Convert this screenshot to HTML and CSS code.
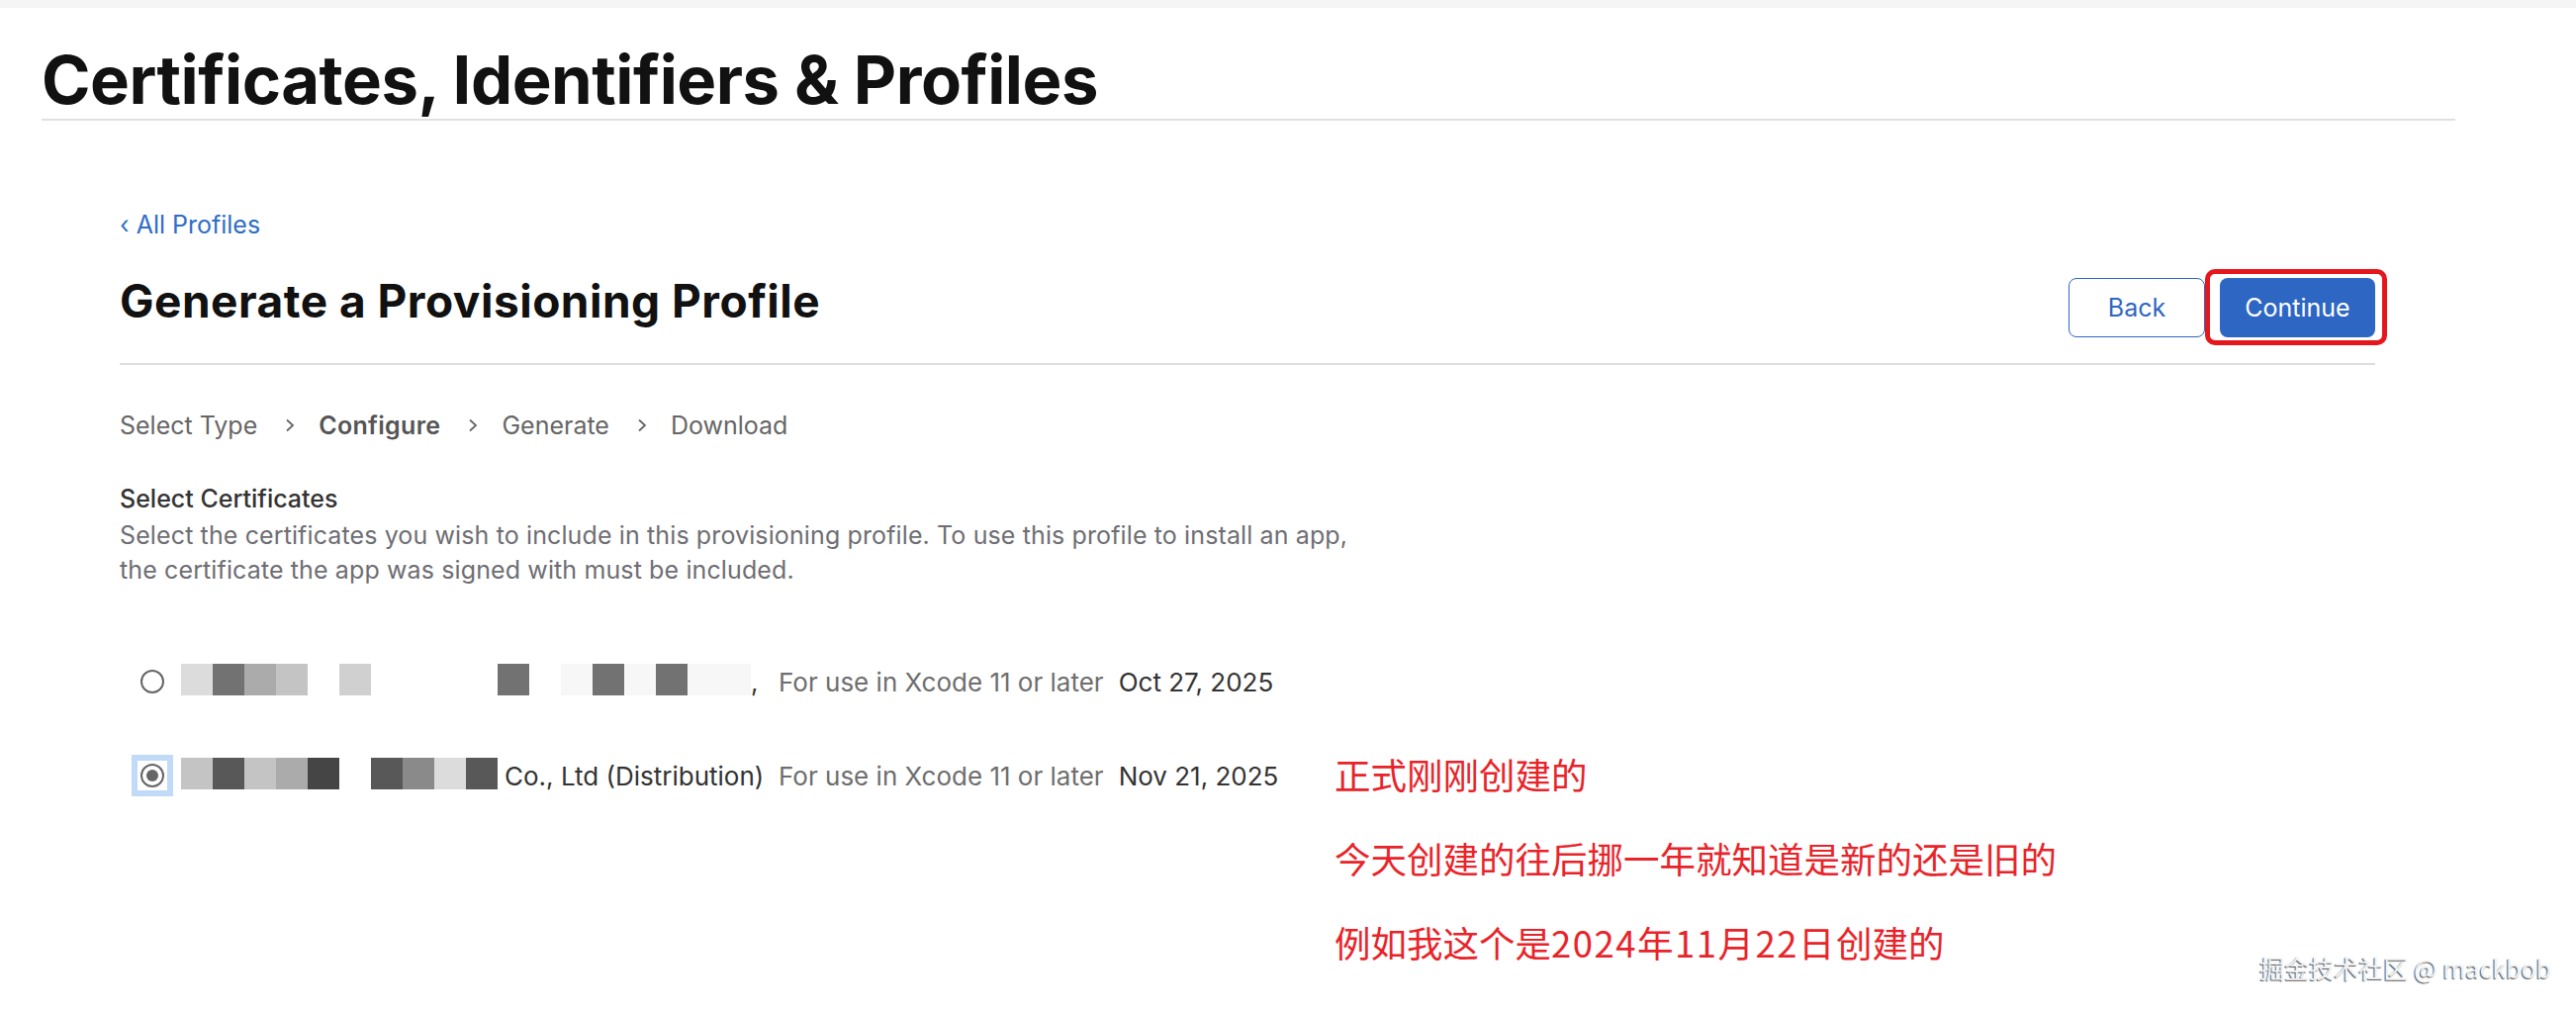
FILE: index.html
```html
<!DOCTYPE html>
<html lang="en">
<head>
  <meta charset="UTF-8" />
  <meta name="viewport" content="width=device-width, initial-scale=1.0" />
  <title>Certificates, Identifiers &amp; Profiles</title>
  <link rel="stylesheet" href="styles.css">
</head>
<body>
  <div class="topbar"></div>
  <header class="page-header">
    <h1>Certificates, Identifiers &amp; Profiles</h1>
  </header>
  <main class="content">
    <a class="back-link" href="#">&lsaquo; All Profiles</a>
    <div class="title-row">
      <h2>Generate a Provisioning Profile</h2>
      <div class="actions">
        <button class="btn btn-secondary">Back</button>
        <span class="highlight"><button class="btn btn-primary">Continue</button></span>
      </div>
    </div>

    <!-- wizard steps -->
    <nav class="steps">
      <span>Select Type</span>
      <svg class="chev" viewBox="0 0 10 14"><path d="M2 1.5 L8 7 L2 12.5" /></svg>
      <span class="current">Configure</span>
      <svg class="chev" viewBox="0 0 10 14"><path d="M2 1.5 L8 7 L2 12.5" /></svg>
      <span>Generate</span>
      <svg class="chev" viewBox="0 0 10 14"><path d="M2 1.5 L8 7 L2 12.5" /></svg>
      <span>Download</span>
    </nav>

    <section class="certs">
      <h3>Select Certificates</h3>
      <p>Select the certificates you wish to include in this provisioning profile. To use this profile to install an app,<br>the certificate the app was signed with must be included.</p>

      <ul class="cert-list">
        <li class="cert">
          <span class="radio-wrap"><span class="radio"></span></span>
          <span class="cert-name">
            <i class="blk s1"></i><i class="blk s2"></i><i class="blk s3"></i><i class="blk s4"></i><i class="blk"></i><i class="blk s5"></i><i class="blk"></i><i class="blk"></i><i class="blk"></i><i class="blk"></i><i class="blk s2"></i><i class="blk"></i><i class="blk s0"></i><i class="blk s2"></i><i class="blk s0"></i><i class="blk s2"></i><i class="blk s0"></i><i class="blk s0"></i>,
          </span>
          <span class="cert-use">For use in Xcode 11 or later</span>
          <span class="cert-date">Oct 27, 2025</span>
        </li>
        <li class="cert">
          <span class="radio-wrap focused"><span class="radio checked"></span></span>
          <span class="cert-name">
            <i class="blk s4"></i><i class="blk s6"></i><i class="blk s4"></i><i class="blk s3"></i><i class="blk s7"></i><i class="blk"></i><i class="blk s6"></i><i class="blk s8"></i><i class="blk s1"></i><i class="blk s6"></i><span class="org">Co., Ltd (Distribution)</span>
          </span>
          <span class="cert-use">For use in Xcode 11 or later</span>
          <span class="cert-date">Nov 21, 2025</span>
        </li>
      </ul>
    </section>
  </main>

  <div class="notes">
    <p>正式刚刚创建的</p>
    <p>今天创建的往后挪一年就知道是新的还是旧的</p>
    <p>例如我这个是<span class="date">2024年11月22日</span>创建的</p>
  </div>
  <div class="watermark">掘金技术社区 @ mackbob</div>
</body>
</html>
```

FILE: styles.css
```css
body {
  margin: 0;
  font-family: Inter, "Noto Sans", sans-serif;
  color: #1d1d1f;
  background: #fff;
}

.topbar {
  height: 8px;
  background-color: #f5f5f5;
}

.page-header {
  margin: 0 122px 0 42px;
}
.page-header h1 {
  margin: 34px 0 0;
  font-size: 67px;
  line-height: 78px;
  font-weight: 700;
  letter-spacing: -0.5px;
  color: #111;
  border-bottom: 2px solid #e0e0e0;
}

.content {
  padding: 0 203px 0 121px;
}

.back-link {
  display: block;
  margin-top: 87px;
  font-size: 25px;
  line-height: 36px;
  color: #2f6ec6;
  text-decoration: none;
}

.title-row {
  display: flex;
  justify-content: space-between;
  align-items: flex-start;
  margin-top: 31px;
  padding-bottom: 26px;
  border-bottom: 2px solid #dedede;
}
.title-row h2 {
  margin: 0;
  font-size: 46px;
  line-height: 56px;
  font-weight: 700;
  letter-spacing: 0.5px;
  color: #111;
}
.actions {
  display: flex;
  gap: 15px;
  margin-top: 5px;
}
.btn {
  height: 60px;
  border-radius: 8px;
  font-family: inherit;
  font-size: 25px;
  cursor: pointer;
}
.btn-secondary {
  width: 138px;
  background: #fff;
  color: #2d66c3;
  border: 1.5px solid #2d66c3;
}
.btn-primary {
  width: 157px;
  background: #2d66c3;
  color: #fff;
  border: none;
}
.highlight {
  position: relative;
  display: block;
}
.highlight::after {
  content: "";
  position: absolute;
  top: -9px;
  right: -12px;
  bottom: -8px;
  left: -15px;
  border: 5px solid #e5171d;
  border-radius: 10px;
}

.steps {
  display: flex;
  align-items: center;
  margin-top: 43px;
  font-size: 25px;
  line-height: 36px;
  color: #666;
}
.steps .current {
  font-weight: 600;
  color: #555;
  letter-spacing: 0.3px;
}
.chev {
  width: 10px;
  height: 14px;
  margin: 0 24px 0 28px;
}
.chev path {
  fill: none;
  stroke: #666;
  stroke-width: 1.8;
}

.certs {
  margin-top: 38px;
}
.certs h3 {
  margin: 0;
  font-size: 25px;
  line-height: 36px;
  font-weight: 500;
  color: #333;
}
.certs p {
  margin: 2px 0 0;
  font-size: 25px;
  line-height: 35px;
  letter-spacing: 0.12px;
  color: #6e6e73;
}

.cert-list {
  list-style: none;
  margin: 67px 0 0;
  padding: 0;
}
.cert {
  display: flex;
  align-items: center;
  height: 56px;
  font-size: 26px;
  margin-bottom: 39px;
}
.radio-wrap {
  display: block;
  padding: 3px;
  margin-left: 18px;
  background: #fff;
}
.radio-wrap.focused {
  outline: 6px solid #c0daf7;
}
.radio {
  display: block;
  box-sizing: border-box;
  width: 24px;
  height: 24px;
  border: 2px solid #666;
  border-radius: 50%;
  position: relative;
}
.radio.checked::after {
  content: "";
  position: absolute;
  top: 4px;
  left: 4px;
  width: 12px;
  height: 12px;
  border-radius: 50%;
  background: #666;
}
.cert-name {
  display: flex;
  align-items: center;
  width: 601px;
  padding-left: 4px;
  margin-left: 10px;
  box-sizing: border-box;
  color: #333;
}
.blk {
  display: block;
  width: 32px;
  height: 32px;
  margin-top: -4px;
}
.s0 { background: #f7f7f7; }
.s1 { background: #dcdcdc; }
.s2 { background: #727272; }
.s3 { background: #ababab; }
.s4 { background: #c4c4c4; }
.s5 { background: #d0d0d0; }
.s6 { background: #585858; }
.s7 { background: #454545; }
.s8 { background: #8a8a8a; }
.org {
  margin-left: 7px;
}
.cert-use {
  margin-left: 7px;
  color: #6e6e6e;
}
.cert-date {
  margin-left: 15px;
  color: #333;
}

.notes {
  position: absolute;
  left: 1349px;
  top: 740px;
  font-family: "Noto Sans CJK SC", sans-serif;
  font-size: 36.5px;
  line-height: 85px;
  color: #e8242a;
}
.notes p {
  margin: 0;
}
.notes .date {
  letter-spacing: 1.5px;
}

.watermark {
  position: absolute;
  right: 25px;
  top: 962px;
  font-family: "Noto Sans CJK SC", sans-serif;
  font-size: 25px;
  line-height: 32px;
  color: #f2f2f2;
  text-shadow: -1px 1px 1px #555;
}
```
